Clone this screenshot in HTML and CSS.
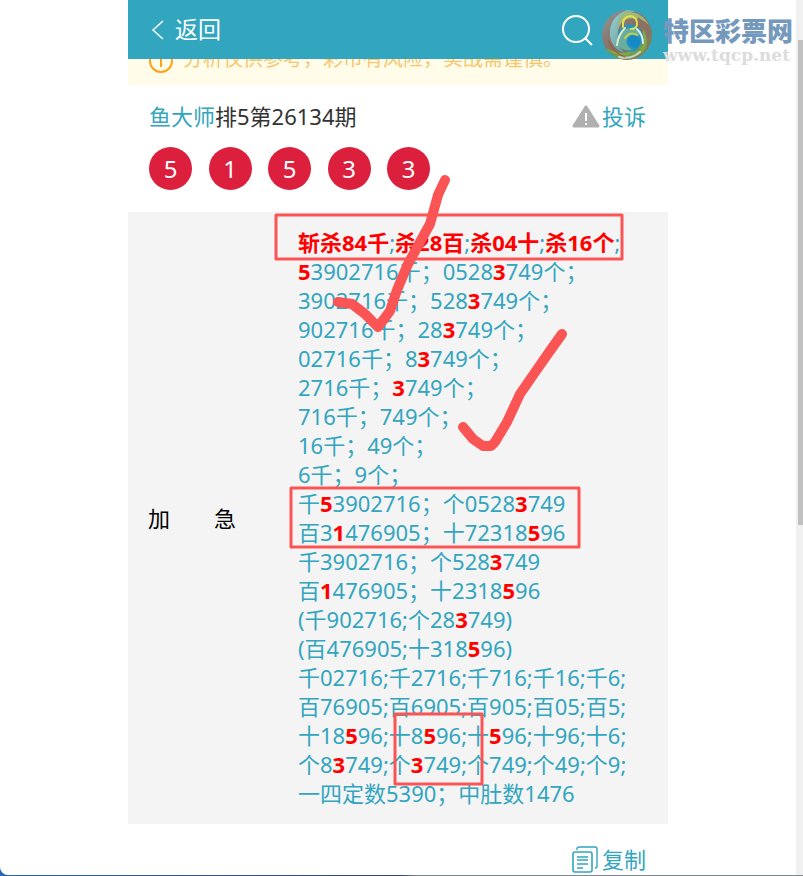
FILE: index.html
```html
<!DOCTYPE html>
<html lang="zh-CN">
<head>
    <meta charset="UTF-8">
    <meta name="viewport" content="width=device-width, initial-scale=1">
    <title>鱼大师排5第26134期</title>
    <link rel="stylesheet" href="styles.css">
</head>
<body>
    <div class="window">
        <main class="page">
            <header class="topbar">
                <a class="back" href="#">
                    <svg width="14" height="20" viewBox="0 0 14 20"><path d="M12 1L2 10l10 9"/></svg>
                    返回
                </a>
                <button class="search" type="button" aria-label="搜索">
                    <svg width="32" height="32" viewBox="0 0 32 32"><circle cx="15" cy="15" r="13"/><path d="M24 24l7 7"/></svg>
                </button>
            </header>

            <div class="notice">
                <svg width="24" height="24" viewBox="0 0 24 24"><circle cx="12" cy="12" r="11"/><path d="M12 5v2M12 10v8"/></svg>
                <p>分析仅供参考，彩市有风险，实战需谨慎。</p>
            </div>

            <section class="issue">
                <div class="issue-head">
                    <h1><a href="#">鱼大师</a>排5第26134期</h1>
                    <a class="action" href="#">
                        <svg width="28" height="24" viewBox="0 0 28 24">
                            <path d="M14 2L26 21H2z" fill="#b0b0b0" stroke="#b0b0b0" stroke-width="3" stroke-linejoin="round"/>
                            <path d="M14 8v8M14 18v2" stroke="#fff" stroke-width="2"/>
                        </svg>
                        投诉
                    </a>
                </div>
                <ul class="balls">
                    <li>5</li>
                    <li>1</li>
                    <li>5</li>
                    <li>3</li>
                    <li>3</li>
                </ul>
            </section>

            <section class="plan">
                <div class="plan-name"><span>加</span><span>急</span></div>
                <div class="plan-text">
                    <p><b>斩杀84千</b>;<b>杀28百</b>;<b>杀04十</b>;<b>杀16个</b>;</p>
                    <p><b>5</b>3902716千；0528<b>3</b>749个；</p>
                    <p>3902716千；528<b>3</b>749个；</p>
                    <p>902716千；28<b>3</b>749个；</p>
                    <p>02716千；8<b>3</b>749个；</p>
                    <p>2716千；<b>3</b>749个；</p>
                    <p>716千；749个；</p>
                    <p>16千；49个；</p>
                    <p>6千；9个；</p>
                    <p>千<b>5</b>3902716；个0528<b>3</b>749</p>
                    <p>百3<b>1</b>476905；十72318<b>5</b>96</p>
                    <p>千3902716；个528<b>3</b>749</p>
                    <p>百<b>1</b>476905；十2318<b>5</b>96</p>
                    <p>(千902716;个28<b>3</b>749)</p>
                    <p>(百476905;十318<b>5</b>96)</p>
                    <p>千02716;千2716;千716;千16;千6;</p>
                    <p>百76905;百6905;百905;百05;百5;</p>
                    <p>十18<b>5</b>96;十8<b>5</b>96;十<b>5</b>96;十96;十6;</p>
                    <p>个8<b>3</b>749;个<b>3</b>749;个749;个49;个9;</p>
                    <p>一四定数5390；中肚数1476</p>
                </div>
            </section>

            <footer class="tools">
                <button class="action" type="button">
                    <svg width="28" height="28" viewBox="0 0 28 28" fill="none" stroke="#32a5bf">
                        <path d="M5 4V3q0-2 2-2h16q2 0 2 2v17q0 2-2 2" stroke-width="1.4"/>
                        <rect x="1" y="6" width="19" height="20" rx="2" stroke-width="1.6"/>
                        <path d="M5 11h11M5 14h11M5 18h11M5 22h6" stroke-width="1.4"/>
                    </svg>
                    复制
                </button>
            </footer>

            <!-- hand-drawn marks over the plan -->
            <svg class="marks" width="540" height="800" viewBox="0 0 540 800">
                <rect x="148" y="215" width="346" height="44"/>
                <rect x="163" y="488" width="288" height="59"/>
                <rect x="267" y="714" width="87" height="70"/>
                <path class="pen" d="M317 180l-7 15-8 29-5 9-17 31-11 26-7 21-12 16-13-13-13-10-14-2"/>
                <path class="pen" d="M434 334l-10 14-14 20-18 26-13 28-12 20-4 4h-8l-10-7-10-12"/>
            </svg>
        </main>

        <div class="scrollbar"><div class="thumb"></div></div>

        <div class="watermark">
            <svg width="52" height="52" viewBox="0 0 52 52">
                <defs>
                    <linearGradient id="rim" x1="0" y1="0" x2="1" y2="1">
                        <stop offset="0" stop-color="#8c9896"/>
                        <stop offset=".5" stop-color="#8b6c62"/>
                        <stop offset="1" stop-color="#7a8a50"/>
                    </linearGradient>
                    <linearGradient id="sweep" x1="0" y1="0" x2="1" y2="1">
                        <stop offset="0" stop-color="#a5d3cf"/>
                        <stop offset="1" stop-color="#3f8f95"/>
                    </linearGradient>
                </defs>
                <circle cx="26" cy="26" r="25" fill="url(#rim)"/>
                <path d="M26 1Q8 8 9 26q1 13 14 18Q12 26 20 14q4-8 14-12-4-1-8-1z" fill="url(#sweep)"/>
                <path d="M24 3q17-1 24 13-9-9-22-6-7 3-9 10-1-11 7-17z" fill="#a3b973"/>
                <path d="M37 8q13 9 10 25-4 9-12 12 9-13 4-24-2-8-2-13z" fill="#8a7264"/>
                <path d="M6 39q14 9 26 2 11-7 10-21 8 13 0 23-12 9-24 5-8-3-12-9z" fill="#83a84a"/>
                <path d="M17 24q3-8 12-9 12 2 14 15-1 12-13 13-14-2-13-19z" fill="#2a93bb"/>
                <path d="M16 35q-1-13 12-16 9 0 13 8-9-4-14 1-5 8 5 13-11 2-16-6z" fill="#69ad9e"/>
                <path d="M27 29q7-5 12 2 1 6-5 8-9-2-7-10z" fill="#1589c5"/>
                <g fill="none" stroke-linecap="round">
                    <path d="M6 41q17 13 33-1M13 47q20 5 30-15" stroke="#6d9d50" stroke-width="2"/>
                    <path d="M18 48q12 3 21-5" stroke="#c7d0c9" stroke-width="2"/>
                    <path d="M8 32q4 12 16 16" stroke="#a64f3a" stroke-width="1"/>
                    <path d="M22 18q-1-10 7-11 8 1 7 9-1 4-6 4" stroke="#e0e44f" stroke-width="2"/>
                    <path d="M24 19q-7 7-8 17" stroke="#dfe9c8" stroke-width="2"/>
                    <path d="M24 29q5-7 12-3" stroke="#c5d04c" stroke-width="2"/>
                    <path d="M36 20q6 6 6 14" stroke="#d9eff0" stroke-width="2"/>
                </g>
            </svg>
            <div class="watermark-text">
                <strong>特区彩票网</strong>
                <span>www.tqcp.net</span>
            </div>
        </div>
    </div>
</body>
</html>
```

FILE: styles.css
```css
:root {
    --primary-color: #32a5bf;
    --ball-color: #db1f3d;
    --mark-color: #fb5454;
    --plan-bg: #f4f4f4;
}

* {
    box-sizing: border-box;
}

body {
    margin: 0;
    background: linear-gradient(90deg, #2866b5, #34456f 50%, #808892 52%);
    font-family: "Noto Sans", "Noto Sans CJK SC", sans-serif;
    font-size: 22px;
    line-height: 29px;
    color: #333;
}

h1, p, ul {
    margin: 0;
    padding: 0;
    font-size: inherit;
    font-weight: normal;
}

a {
    color: var(--primary-color);
    text-decoration: none;
}

button {
    padding: 0;
    border: none;
    background: none;
    font: inherit;
    cursor: pointer;
}

.window {
    position: relative;
    display: flex;
    min-height: calc(100vh - 1px);
    margin-bottom: 1px;
    background: #fff;
    border-bottom-left-radius: 8px;
    overflow: hidden;
}

.page {
    position: relative;
    flex: 0 1 540px;
    margin: 0 auto;
}

.topbar {
    display: flex;
    align-items: center;
    justify-content: space-between;
    height: 59px;
    padding: 0 75px 0 23px;
    background: var(--primary-color);
}

.topbar svg {
    fill: none;
    stroke: #fff;
    stroke-width: 2;
}

.back {
    display: flex;
    align-items: center;
    gap: 10px;
    color: #fff;
    font-size: 23px;
}

.topbar .back svg {
    stroke-width: 1.5;
}

.search {
    display: flex;
}

/* partly scrolled under the top bar */
.notice {
    display: flex;
    align-items: flex-end;
    gap: 10px;
    height: 26px;
    padding: 0 21px 12px;
    background: #fffdea;
    color: #f9c56b;
    font-size: 20px;
    overflow: hidden;
}

.notice svg {
    fill: none;
    stroke: #ffa21a;
    stroke-width: 2;
}

.issue {
    padding: 17px 22px 22px 21px;
}

.issue-head {
    display: flex;
    justify-content: space-between;
}

.action {
    display: flex;
    align-items: center;
    gap: 2px;
    color: var(--primary-color);
}

.balls {
    display: flex;
    justify-content: space-between;
    max-width: 281px;
    margin-top: 16px;
    list-style: none;
}

.balls li {
    width: 43px;
    height: 43px;
    border-radius: 50%;
    background: var(--ball-color);
    color: #fff;
    font-size: 24px;
    line-height: 43px;
    text-align: center;
}

.plan {
    display: flex;
    align-items: center;
    padding: 16px 20px;
    background: var(--plan-bg);
}

.plan-name {
    display: flex;
    justify-content: space-between;
    width: 88px;
    margin-right: 62px;
    color: #000;
}

.plan-text {
    color: var(--primary-color);
    white-space: nowrap;
}

.plan-text b {
    color: #f00;
}

.tools {
    display: flex;
    justify-content: flex-end;
    padding: 21px 22px 0;
}

.marks {
    position: absolute;
    top: 0;
    left: 0;
    fill: none;
    stroke: var(--mark-color);
    stroke-width: 3;
    stroke-linejoin: round;
    pointer-events: none;
}

.marks .pen {
    stroke-width: 10;
    stroke-linecap: round;
}

.scrollbar {
    width: 7px;
    padding: 40px 0 0 2px;
    background: #f0f0f0;
}

.thumb {
    height: 485px;
    background: #c1c1c1;
}

.watermark {
    position: absolute;
    top: 9px;
    right: 10px;
    display: flex;
    gap: 10px;
}

.watermark-text {
    display: flex;
    flex-direction: column;
    padding-top: 6px;
}

.watermark-text strong {
    color: #7599bd;
    font-size: 26px;
    font-weight: 900;
    line-height: 32px;
}

.watermark-text span {
    color: #dcdcdc;
    font-family: "DejaVu Serif", serif;
    font-size: 17px;
    font-weight: bold;
    line-height: 16px;
}
```
